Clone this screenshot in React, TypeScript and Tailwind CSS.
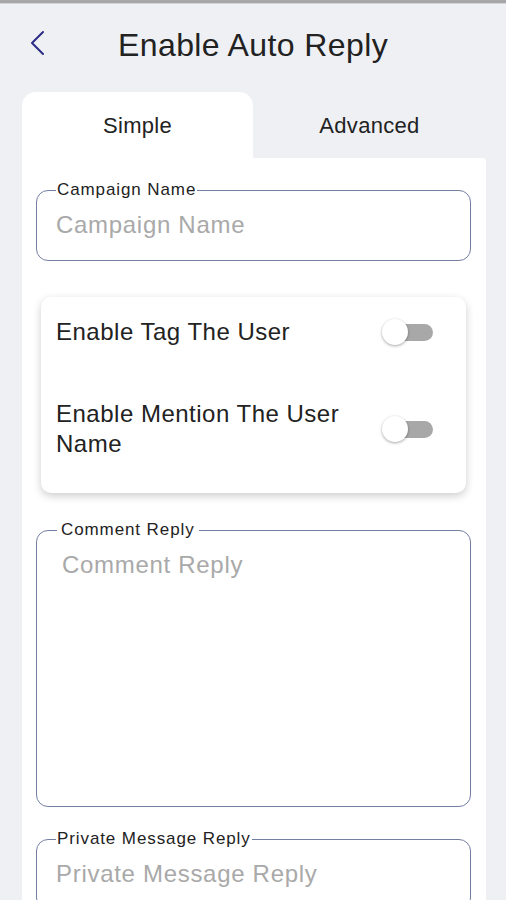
import { useState } from 'react';

const font = { fontFamily: '"Liberation Sans", Arial, sans-serif' };

const Toggle = ({ on, onChange }: { on: boolean; onChange: () => void }) => (
  <button onClick={onChange} className="relative w-[52px] h-[30px] shrink-0">
    <span className="absolute left-[6px] right-[0px] top-[7px] h-[17px] rounded-full bg-[#a8a8a8]" />
    <span
      className={`absolute top-[2px] w-[26px] h-[26px] rounded-full bg-white shadow-[0_1px_3px_rgba(0,0,0,0.35)] ${
        on ? 'left-[24px]' : 'left-[1px]'
      }`}
    />
  </button>
);

export default function App() {
  const [tab, setTab] = useState<'simple' | 'advanced'>('simple');
  const [tagUser, setTagUser] = useState(false);
  const [mention, setMention] = useState(false);

  return (
    <div className="min-h-[900px] bg-[#eff0f4] text-[#222]" style={font}>
      <div className="h-[3px] bg-[#a7a7a9]" />
      <div className="h-px bg-[#d4d4d8]" />

      {/* header */}
      <div className="flex items-center h-[80px] pl-[28px] pt-[2px]">
        <svg width="20" height="28" viewBox="0 0 20 28" fill="none" className="mb-[4px]">
          <path d="M15 3 L4 14 L15 25" stroke="#2b2d86" strokeWidth="2" strokeLinecap="round" strokeLinejoin="round" />
        </svg>
        <h1 className="ml-[70px] text-[32px] leading-[40px] tracking-[0.4px] text-[#222]">Enable Auto Reply</h1>
      </div>

      <div className="mr-[20px] ml-[22px] mt-[8px]">
        {/* tabs */}
        <div className="flex h-[66px]">
          <button
            onClick={() => setTab('simple')}
            className={`w-[231px] rounded-t-[14px] text-[22px] tracking-[0.3px] text-[#222] ${
              tab === 'simple' ? 'bg-white' : ''
            }`}
          >
            Simple
          </button>
          <button
            onClick={() => setTab('advanced')}
            className={`flex-1 rounded-t-[14px] text-[22px] tracking-[0.3px] text-[#222] ${
              tab === 'advanced' ? 'bg-white' : ''
            }`}
          >
            Advanced
          </button>
        </div>

        {/* panel */}
        <div className="bg-white rounded-tr-[4px] pt-[23px] pl-[14px] pr-[15px] pb-[40px]">
          <fieldset className="border border-[#737ea3] rounded-[12px] pl-[19px] pr-4 pb-[9px]">
            <legend className="px-[1px] text-[17px] leading-[18px] tracking-[0.9px] text-[#222]">Campaign Name</legend>
            <input
              className="h-[52px] w-full outline-none text-[24px] tracking-[0.7px] text-[#222] placeholder:text-[#a9a9a9]"
              placeholder="Campaign Name"
            />
          </fieldset>

          <div className="mt-[36px] mx-[5px] rounded-[10px] bg-white shadow-[0_3px_8px_rgba(0,0,0,0.2)] pl-[15px] pr-[33px] pt-[20px] pb-[34px] flex flex-col gap-[52px]">
            <div className="flex items-center gap-[10px]">
              <span className="flex-1 text-[24px] leading-[30px] tracking-[0.5px]">Enable Tag The User</span>
              <Toggle on={tagUser} onChange={() => setTagUser(!tagUser)} />
            </div>
            <div className="flex items-center gap-[10px]">
              <span className="flex-1 text-[24px] leading-[30px] tracking-[0.5px]">Enable Mention The User Name</span>
              <Toggle on={mention} onChange={() => setMention(!mention)} />
            </div>
          </div>

          <fieldset className="mt-[28px] border border-[#737ea3] rounded-[12px] pl-[20px] pr-4 pb-[10px]">
            <legend className="px-[4px] text-[17px] leading-[18px] tracking-[0.9px] text-[#222]">Comment Reply</legend>
            <textarea
              className="block h-[257px] w-full resize-none outline-none pl-[5px] pt-[11px] text-[24px] leading-[30px] tracking-[0.7px] text-[#222] placeholder:text-[#a9a9a9]"
              placeholder="Comment Reply"
            />
          </fieldset>

          <fieldset className="mt-[23px] border border-[#737ea3] rounded-[12px] pl-[19px] pr-4 pb-[9px]">
            <legend className="px-[1px] text-[17px] leading-[18px] tracking-[0.9px] text-[#222]">Private Message Reply</legend>
            <input
              className="h-[52px] w-full outline-none text-[24px] tracking-[0.7px] text-[#222] placeholder:text-[#a9a9a9]"
              placeholder="Private Message Reply"
            />
          </fieldset>
        </div>
      </div>
    </div>
  );
}
